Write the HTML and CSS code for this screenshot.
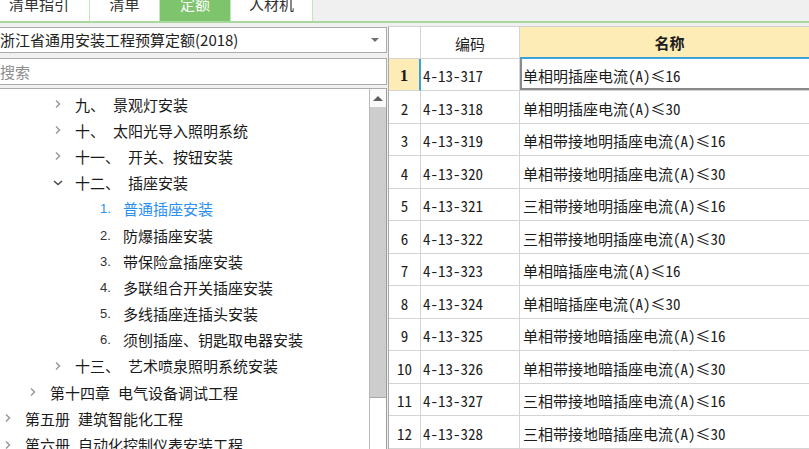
FILE: index.html
```html
<!DOCTYPE html>
<html lang="zh-CN">
<head>
<meta charset="utf-8">
<title>定额</title>
<link rel="stylesheet" href="styles.css">
</head>
<body>
<div class="app">
  <div class="tabbar">
    <div class="tab tab-guide">清单指引</div>
    <div class="tab tab-list">清单</div>
    <div class="tab tab-quota active">定额</div>
    <div class="tab tab-res">人材机</div>
  </div>
  <div class="main">
    <div class="left">
      <div class="select"><span class="select-text">浙江省通用安装工程预算定额(2018)</span><span class="caret"></span></div>
      <div class="search">搜索</div>
      <div class="tree">
        <ul class="tree-list">
          <li class="node l2"><svg class="chev" viewBox="0 0 10 10"><path d="M3 1.5 L6.5 5 L3 8.5"/></svg><span class="no">九、</span><span>景观灯安装</span></li>
          <li class="node l2"><svg class="chev" viewBox="0 0 10 10"><path d="M3 1.5 L6.5 5 L3 8.5"/></svg><span class="no">十、</span><span>太阳光导入照明系统</span></li>
          <li class="node l2"><svg class="chev" viewBox="0 0 10 10"><path d="M3 1.5 L6.5 5 L3 8.5"/></svg><span class="no">十一、</span><span>开关、按钮安装</span></li>
          <li class="node l2"><svg class="chev open" viewBox="0 0 10 10"><path d="M1 3 L5 6.5 L9 3"/></svg><span class="no">十二、</span><span>插座安装</span></li>
          <li class="node l3 selected"><span class="idx">1.</span><span>普通插座安装</span></li>
          <li class="node l3"><span class="idx">2.</span><span>防爆插座安装</span></li>
          <li class="node l3"><span class="idx">3.</span><span>带保险盒插座安装</span></li>
          <li class="node l3"><span class="idx">4.</span><span>多联组合开关插座安装</span></li>
          <li class="node l3"><span class="idx">5.</span><span>多线插座连插头安装</span></li>
          <li class="node l3"><span class="idx">6.</span><span>须刨插座、钥匙取电器安装</span></li>
          <li class="node l2"><svg class="chev" viewBox="0 0 10 10"><path d="M3 1.5 L6.5 5 L3 8.5"/></svg><span class="no">十三、</span><span>艺术喷泉照明系统安装</span></li>
          <li class="node l1"><svg class="chev" viewBox="0 0 10 10"><path d="M3 1.5 L6.5 5 L3 8.5"/></svg><span class="no">第十四章</span><span>电气设备调试工程</span></li>
          <li class="node l0"><svg class="chev" viewBox="0 0 10 10"><path d="M3 1.5 L6.5 5 L3 8.5"/></svg><span class="no">第五册</span><span>建筑智能化工程</span></li>
          <li class="node l0"><svg class="chev" viewBox="0 0 10 10"><path d="M3 1.5 L6.5 5 L3 8.5"/></svg><span class="no">第六册</span><span>自动化控制仪表安装工程</span></li>
        </ul>
        <div class="vscroll">
          <div class="sb-up"><span class="sb-arrow"></span></div>
          <div class="sb-thumb"></div>
          <div class="sb-track"></div>
        </div>
      </div>
    </div>
    <div class="grid">
      <table class="sheet">
        <colgroup><col class="c-no"><col class="c-code"><col class="c-name"></colgroup>
        <thead>
          <tr><th class="h-no"></th><th class="h-code">编码</th><th class="h-name">名称</th></tr>
        </thead>
        <tbody>
          <tr class="cur"><td class="no">1</td><td class="code">4-13-317</td><td class="name focus">单相明插座电流(A)≤16</td></tr>
          <tr><td class="no">2</td><td class="code">4-13-318</td><td class="name">单相明插座电流(A)≤30</td></tr>
          <tr><td class="no">3</td><td class="code">4-13-319</td><td class="name">单相带接地明插座电流(A)≤16</td></tr>
          <tr><td class="no">4</td><td class="code">4-13-320</td><td class="name">单相带接地明插座电流(A)≤30</td></tr>
          <tr><td class="no">5</td><td class="code">4-13-321</td><td class="name">三相带接地明插座电流(A)≤16</td></tr>
          <tr><td class="no">6</td><td class="code">4-13-322</td><td class="name">三相带接地明插座电流(A)≤30</td></tr>
          <tr><td class="no">7</td><td class="code">4-13-323</td><td class="name">单相暗插座电流(A)≤16</td></tr>
          <tr><td class="no">8</td><td class="code">4-13-324</td><td class="name">单相暗插座电流(A)≤30</td></tr>
          <tr><td class="no">9</td><td class="code">4-13-325</td><td class="name">单相带接地暗插座电流(A)≤16</td></tr>
          <tr><td class="no">10</td><td class="code">4-13-326</td><td class="name">单相带接地暗插座电流(A)≤30</td></tr>
          <tr><td class="no">11</td><td class="code">4-13-327</td><td class="name">三相带接地暗插座电流(A)≤16</td></tr>
          <tr><td class="no">12</td><td class="code">4-13-328</td><td class="name">三相带接地暗插座电流(A)≤30</td></tr>
        </tbody>
      </table>
    </div>
  </div>
</div>
</body>
</html>
```

FILE: styles.css
```css
* { box-sizing: border-box; margin: 0; padding: 0; }
html, body { width: 809px; height: 449px; overflow: hidden; }
body {
  background: #f0f0f0;
  font-family: "Noto Sans CJK SC", "Noto Sans", sans-serif;
  font-size: 15px;
  color: #1c1c1c;
}
.app { display: flex; flex-direction: column; height: 449px; }

/* tabs */
.tabbar {
  display: flex;
  align-items: flex-end;
  height: 23px;
  overflow: hidden;
  border-bottom: 2px solid #a9d89e;
  background: #f0f0f0;
  flex: none;
}
.tab {
  flex: none;
  height: 25px;
  line-height: 15px;
  padding-bottom: 10px;
  background: #fff;
  border-right: 1px solid #c3e5bb;
  text-align: center;
  color: #333;
}
.tab-guide { width: 90px; text-align: left; padding-left: 9px; }
.tab-list { width: 70px; }
.tab-quota { width: 71px; }
.tab-res { width: 82px; }
.tab.active { background: #7dc46c; color: #fff; }

/* main */
.main { flex: 1; display: flex; padding-top: 3px; min-height: 0; }
.left { width: 387px; flex: none; display: flex; flex-direction: column; }

.select {
  margin-top: 1px;
  height: 26px;
  background: #fff;
  border: 1px solid #ababab;
  border-left: none;
  display: flex;
  align-items: center;
  justify-content: space-between;
  padding-right: 7px;
  line-height: 24px;
  color: #222;
  white-space: nowrap;
}
.caret {
  width: 0; height: 0;
  border-left: 4px solid transparent;
  border-right: 4px solid transparent;
  border-top: 4px solid #707070;
}
.search {
  margin-top: 5px;
  height: 27px;
  background: #fff;
  border: 1px solid #ababab;
  border-left: none;
  line-height: 25px;
  color: #8e8e8e;
}
.tree {
  margin-top: 3px;
  flex: 1;
  min-height: 0;
  display: flex;
  background: #fff;
  border-top: 1px solid #ababab;
  overflow: hidden;
}
.tree-list { flex: 1; list-style: none; padding-top: 2px; }
.node {
  display: flex;
  align-items: center;
  height: 26.2px;
  white-space: nowrap;
  color: #1a1a1a;
}
.node.l0 { padding-left: 3px; }
.node.l1 { padding-left: 28px; }
.node.l2 { padding-left: 53px; }
.node.l3 { padding-left: 100px; }
.chev {
  width: 10px; height: 10px;
  margin-right: 12px;
  flex: none;
  fill: none;
  stroke: #9a9a9a;
  stroke-width: 1.5;
}
.chev.open { stroke: #4a4a4a; }
.no { margin-right: 8px; }
.idx {
  width: 23px;
  font-family: "Liberation Sans", sans-serif;
  font-size: 13px;
  color: #333;
}
.node.selected, .node.selected .idx { color: #2a8ff0; }

.vscroll {
  width: 18px;
  flex: none;
  display: flex;
  flex-direction: column;
  border-left: 1px solid #b9b9b9;
  border-right: 1px solid #9c9c9c;
  background: #fff;
}
.sb-up {
  height: 19px;
  display: flex;
  align-items: center;
  justify-content: center;
  border-bottom: 1px solid #d0d0d0;
  background: #fafafa;
}
.sb-arrow {
  width: 0; height: 0;
  border-left: 5px solid transparent;
  border-right: 5px solid transparent;
  border-bottom: 5px solid #5e5e5e;
}
.sb-thumb { height: 290px; background: #cdcdcd; border-bottom: 1px solid #a9a9a9; }
.sb-track { flex: 1; background: #fff; }

/* grid */
.grid { flex: 1; margin-left: 1px; overflow: hidden; min-width: 0; }
.sheet {
  border-collapse: separate;
  border-spacing: 0;
  table-layout: fixed;
  width: 431px;
  background: #fff;
  border-left: 1px solid #a9a9a9;
  border-top: 1px solid #d2d2d2;
  font-family: "Noto Sans Mono CJK SC", "Noto Sans CJK SC", monospace;
  font-size: 15px;
  color: #1c1c1c;
}
.c-no { width: 32px; }
.c-code { width: 99px; }
.c-name { width: 300px; }
.sheet th, .sheet td {
  border-right: 1px solid #d4d4d4;
  border-bottom: 1px solid #d4d4d4;
  white-space: nowrap;
  overflow: hidden;
  vertical-align: middle;
}
.sheet th {
  height: 31.5px;
  font-weight: normal;
  text-align: center;
  font-family: "Noto Sans CJK SC", sans-serif;
  padding-top: 2px;
}
.sheet th.h-name {
  background: #fdecb5;
  font-weight: bold;
  border-bottom: 2px solid #3ea2da;
}
.sheet td { height: 32.5px; padding-top: 3px; }
.sheet td.no { text-align: center; }
.sheet td.code { padding-left: 2px; }
.sheet td.name { padding-left: 3px; }
.sheet tr.cur td.no {
  background: #fdecb5;
  font-weight: bold;
  font-family: "Liberation Serif", serif;
  font-size: 17px;
  border-right: 2px solid #3ea2da;
}
.sheet td.focus { box-shadow: inset 2px -2px 0 #8a8a8a; }
```
